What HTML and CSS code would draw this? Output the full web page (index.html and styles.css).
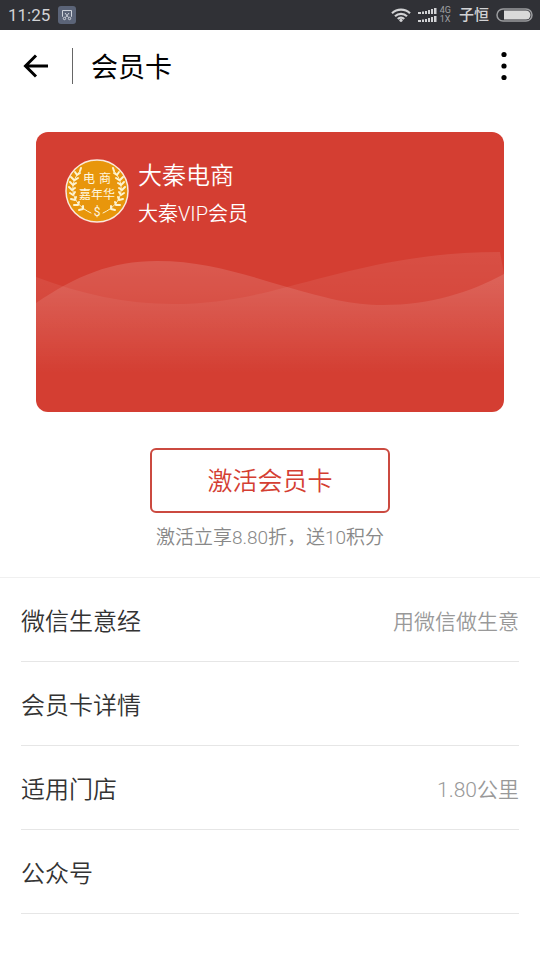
FILE: index.html
```html
<!DOCTYPE html>
<html lang="zh-CN">
<head>
    <meta charset="UTF-8">
    <meta name="viewport" content="width=device-width, initial-scale=1.0">
    <title>会员卡</title>
    <link rel="stylesheet" href="styles.css">
</head>
<body>
    <div class="status-bar">
        <span class="time">11:25</span>
        <svg class="notice" width="18" height="18" viewBox="0 0 18 18">
            <rect width="18" height="18" rx="3" fill="#5b6478"/>
            <g fill="none" stroke="#d0d4dc" stroke-width="1">
                <path d="M5 10.500H4.500V4.500h9v6H13"/>
                <path d="M7 7l3.500 4.500M11 7l-3.500 4.500"/>
                <circle cx="6.500" cy="12.500" r="1.200"/>
                <circle cx="11.500" cy="12.500" r="1.200"/>
            </g>
        </svg>
        <div class="status-right">
            <svg width="20" height="14" viewBox="0 0 20 14">
                <g fill="none" stroke="#d2d3d5" stroke-width="2.200">
                    <path d="M1 5.200a13 13 0 0 1 18 0"/>
                    <path d="M4 8.300a8.500 8.500 0 0 1 12 0"/>
                    <path d="M6.800 11a4.500 4.500 0 0 1 6.400 0"/>
                </g>
                <circle cx="10" cy="12.300" r="1.600" fill="#d2d3d5"/>
            </svg>
            <svg class="signal" width="20" height="14" viewBox="0 0 20 14" fill="#d2d3d5">
                <path d="M0 4h3v2H0zM4 3.500h2V6H4zM7 3h2v3H7zM10 2h2v4h-2zM13 1h2v5h-2zM16 0h2.500v6H16z"/>
                <path d="M0 12h3v2H0zM4 11.500h2V14H4zM7 11h2v3H7zM10 10h2v4h-2zM13 9h2v5h-2zM16 8h2.500v6H16z"/>
            </svg>
            <span class="network"><span>4G</span><span>1X</span></span>
            <span class="carrier">子恒</span>
            <svg width="37" height="14" viewBox="0 0 37 14">
                <rect x="1" y="1" width="35" height="12" rx="6" fill="#303136" stroke="#9b9c9f" stroke-width="1.500"/>
                <path d="M8 2.500h22a4.500 4.500 0 0 1 0 9H8z" fill="#d9d9d9"/>
            </svg>
        </div>
    </div>

    <header class="header">
        <button class="icon-btn" aria-label="返回">
            <svg width="26" height="26" viewBox="0 0 26 26" fill="none" stroke="#000" stroke-width="3">
                <path d="M26 13H3M14 2.500L3.500 13L14 23.500"/>
            </svg>
        </button>
        <h1>会员卡</h1>
        <button class="icon-btn more" aria-label="更多">
            <svg width="6" height="30" viewBox="0 0 6 30">
                <circle cx="3" cy="3.500" r="2.600"/>
                <circle cx="3" cy="15" r="2.600"/>
                <circle cx="3" cy="26.500" r="2.600"/>
            </svg>
        </button>
    </header>

    <main>
        <section class="card">
            <div class="card-head">
                <svg class="logo" width="64" height="64" viewBox="0 0 64 64">
                    <defs>
                        <g id="branch" fill="none" stroke="#fdf3d0" stroke-linecap="round">
                            <path stroke-width="1" d="M15 12C4 24 4 44 26 54"/>
                            <path stroke-width="2" d="M15 12l1-3M12 16l-2-3M12 16l3-2M9 21l-3-3M10 21l3-2M8 26l-3-3M8 26l3-2M7 31l-3-3M7 31l3-2M8 36l-3-2M8 36l2-3M10 41l-4-1M10 41l1-3M13 46l-4 0M13 46l1-3M18 50l-4 1M18 50l0-3"/>
                        </g>
                    </defs>
                    <circle cx="32" cy="32" r="31" fill="#e8960c" stroke="#fbe9dc" stroke-width="1.500"/>
                    <use href="#branch"/>
                    <use href="#branch" transform="matrix(-1 0 0 1 64 0)"/>
                    <g class="logo-text">
                        <text x="24" y="24">电</text>
                        <text x="40" y="24">商</text>
                        <text x="20" y="40">嘉</text>
                        <text x="32" y="40">年</text>
                        <text x="44" y="40">华</text>
                        <text x="32" y="57">$</text>
                    </g>
                </svg>
                <div>
                    <h2>大秦电商</h2>
                    <p>大秦VIP会员</p>
                </div>
            </div>
            <svg class="waves" viewBox="0 0 468 160">
                <defs>
                    <linearGradient id="fade" gradientUnits="userSpaceOnUse" x1="0" y1="5" x2="0" y2="122">
                        <stop offset="0" stop-color="#fff" stop-opacity="0.150"/>
                        <stop offset="0.300" stop-color="#fff" stop-opacity="0.110"/>
                        <stop offset="1" stop-color="#fff" stop-opacity="0"/>
                    </linearGradient>
                    <linearGradient id="fade-back" gradientUnits="userSpaceOnUse" x1="0" y1="0" x2="0" y2="122">
                        <stop offset="0" stop-color="#fff" stop-opacity="0.090"/>
                        <stop offset="1" stop-color="#fff" stop-opacity="0"/>
                    </linearGradient>
                </defs>
                <path fill="url(#fade-back)" d="M0 25C45 42 90 52 137 52C180 52 218 44 251 35C320 17 380 0 464 0L468 22V160H0z"/>
                <path fill="url(#fade)" d="M0 51C40 24 75 9 121 9C170 9 210 23 251 35C290 46 315 53 347 53C395 53 435 40 468 22V160H0z"/>
            </svg>
        </section>

        <section class="activate">
            <button class="activate-btn">激活会员卡</button>
            <p>激活立享8.80折，送10积分</p>
        </section>

        <nav class="menu">
            <a href="#"><span>微信生意经</span><span class="value">用微信做生意</span></a>
            <a href="#"><span>会员卡详情</span></a>
            <a href="#"><span>适用门店</span><span class="value">1.80公里</span></a>
            <a href="#"><span>公众号</span></a>
        </nav>
    </main>
</body>
</html>
```
FILE: styles.css
```css
* {
    margin: 0;
    padding: 0;
    box-sizing: border-box;
}

body {
    background-color: #fff;
    color: #333;
    font-family: Roboto, "Noto Sans CJK SC", sans-serif;
    font-weight: 350;
}

button {
    background: none;
    border: none;
    font-family: inherit;
    font-weight: inherit;
    cursor: pointer;
}

svg {
    display: block;
}

.status-bar {
    display: flex;
    align-items: center;
    height: 30px;
    padding: 0 7px 0 8px;
    background-color: #303136;
    color: #d2d3d5;
}

.time {
    font-size: 17px;
    font-weight: 400;
}

.notice {
    margin-left: 8px;
}

.status-right {
    display: flex;
    align-items: center;
    margin-left: auto;
}

.signal {
    margin-left: 7px;
}

.network {
    display: flex;
    flex-direction: column;
    margin-left: 2px;
    font-size: 9px;
    font-weight: 400;
    line-height: 9px;
    color: #a0a1a4;
}

.carrier {
    margin: 0 7px 0 8px;
    font-size: 15px;
    font-weight: 500;
    line-height: 20px;
}

.header {
    display: flex;
    align-items: center;
    height: 72px;
    padding: 0 22px;
}

.header h1 {
    margin-left: 24px;
    padding-left: 18px;
    border-left: 1px solid #666;
    color: #000;
    font-family: "Noto Sans CJK SC", sans-serif;
    font-size: 27px;
    font-weight: 400;
    line-height: 36px;
}

.more {
    margin-left: auto;
    padding: 0 11px;
}

.card {
    margin: 30px 36px 36px;
    border-radius: 12px;
    background-color: #d43e32;
    overflow: hidden;
}

.card-head {
    display: flex;
    gap: 9px;
    height: 120px;
    padding: 24px 29px;
    color: #fff;
}

.logo {
    margin-top: 3px;
}

.logo-text {
    fill: #fff8e0;
    font-size: 12px;
    font-weight: 400;
    text-anchor: middle;
}

.card-head h2 {
    font-size: 24px;
    font-weight: 350;
    line-height: 40px;
}

.card-head p {
    font-size: 20px;
    line-height: 36px;
}

.waves {
    width: 100%;
}

.activate {
    display: flex;
    flex-direction: column;
    align-items: center;
    padding-bottom: 24px;
    border-bottom: 1px solid #f0f0f0;
}

.activate-btn {
    width: 240px;
    height: 65px;
    padding-bottom: 3px;
    border: 2px solid #cb4a40;
    border-radius: 6px;
    color: #d43e32;
    font-size: 25px;
}

.activate p {
    margin-top: 10px;
    color: #888;
    font-size: 19px;
    line-height: 30px;
}

.menu {
    padding: 0 21px;
}

.menu a {
    display: flex;
    justify-content: space-between;
    align-items: center;
    height: 84px;
    border-bottom: 1px solid #e6e6e6;
    color: #333;
    font-size: 24px;
    text-decoration: none;
}

.menu .value {
    color: #999;
    font-size: 21px;
}
```
